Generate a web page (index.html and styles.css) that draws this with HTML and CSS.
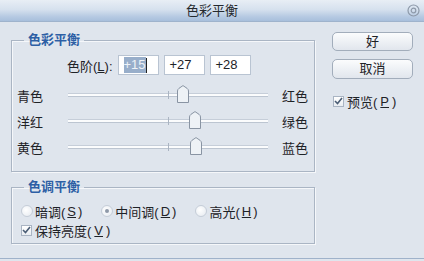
FILE: index.html
```html
<!DOCTYPE html>
<html lang="zh-CN">
<head>
  <meta charset="UTF-8" />
  <title>色彩平衡</title>
  <link rel="stylesheet" href="styles.css">
</head>
<body>
  <div class="dialog">
    <div class="titlebar">
      <span class="title">色彩平衡</span>
      <svg class="close" width="13" height="13" viewBox="0 0 13 13">
        <circle cx="6.5" cy="6.5" r="5.5" fill="none" stroke="#8d99a9" stroke-width="1.2"/>
        <circle cx="6.5" cy="6.5" r="2.3" fill="none" stroke="#8d99a9" stroke-width="1.2"/>
      </svg>
    </div>

    <div class="main">
      <div class="left">
        <!-- Color balance group -->
        <fieldset class="group balance">
          <legend>色彩平衡</legend>
          <div class="levels">
            <span class="levels-label">色阶(<u>L</u>):</span>
            <div class="field"><span class="sel">+15</span><span class="caret"></span></div>
            <div class="field">+27</div>
            <div class="field">+28</div>
          </div>

          <div class="slider-row">
            <span>青色</span>
            <div class="track">
              <i class="tick"></i>
              <svg class="thumb" style="left: 57.5%;" width="12" height="18" viewBox="0 0 12 18"><path d="M0.5 17.5 V6 Q0.5 4.5 2 3.3 L6 0.6 L10 3.3 Q11.5 4.5 11.5 6 V17.5 Z"/></svg>
            </div>
            <span>红色</span>
          </div>
          <div class="slider-row">
            <span>洋红</span>
            <div class="track">
              <i class="tick"></i>
              <svg class="thumb" style="left: 63.5%;" width="12" height="18" viewBox="0 0 12 18"><path d="M0.5 17.5 V6 Q0.5 4.5 2 3.3 L6 0.6 L10 3.3 Q11.5 4.5 11.5 6 V17.5 Z"/></svg>
            </div>
            <span>绿色</span>
          </div>
          <div class="slider-row">
            <span>黄色</span>
            <div class="track">
              <i class="tick"></i>
              <svg class="thumb" style="left: 64%;" width="12" height="18" viewBox="0 0 12 18"><path d="M0.5 17.5 V6 Q0.5 4.5 2 3.3 L6 0.6 L10 3.3 Q11.5 4.5 11.5 6 V17.5 Z"/></svg>
            </div>
            <span>蓝色</span>
          </div>
        </fieldset>

        <!-- Tone balance group -->
        <fieldset class="group tone">
          <legend>色调平衡</legend>
          <div class="radios">
            <label class="radio"><span class="dot"></span>暗调(<u>S</u>)</label>
            <label class="radio"><span class="dot on"></span>中间调(<u>D</u>)</label>
            <label class="radio"><span class="dot"></span>高光(<u>H</u>)</label>
          </div>
          <label class="check">
            <span class="box"><svg width="9" height="8" viewBox="0 0 9 8"><path d="M1 4 L3.5 6.5 L8 1" fill="none" stroke="#4a5d75" stroke-width="1.6"/></svg></span>
            保持亮度(<u>V</u>)
          </label>
        </fieldset>
      </div>

      <div class="right">
        <button class="btn ok">好</button>
        <button class="btn cancel">取消</button>
        <label class="check preview">
          <span class="box"><svg width="9" height="8" viewBox="0 0 9 8"><path d="M1 4 L3.5 6.5 L8 1" fill="none" stroke="#4a5d75" stroke-width="1.6"/></svg></span>
          预览(<u>P</u>)
        </label>
      </div>
    </div>
  </div>
</body>
</html>
```

FILE: styles.css
```css
:root {
  --bg: #dfe5ed;
  --text: #1e2227;
  --legend: #2d5fa5;
  --line: #aab5c4;
}

body {
  margin: 0;
  width: 424px;
  height: 261px;
  overflow: hidden;
  background: var(--bg);
  font-family: "Liberation Sans", "Noto Sans CJK SC", sans-serif;
  font-size: 13px;
  color: var(--text);
}

.dialog {
  height: 258px;
  border-bottom: 1px solid #9fb2ca;
}

/* Title bar */
.titlebar {
  position: relative;
  height: 21px;
  border-bottom: 1px solid #9fb3cc;
  background: linear-gradient(to bottom, #e8eef5 0%, #d6e1ee 45%, #b5c9e2 80%, #a8bfdc 100%);
  display: flex;
  justify-content: center;
  align-items: center;
}

.title {
  font-size: 13px;
  line-height: 14px;
  color: #25292e;
}

.close {
  position: absolute;
  right: 4px;
  top: 4px;
}

/* Main area */
.main {
  display: flex;
  padding-left: 11px;
}

.left {
  width: 304px;
}

.right {
  width: 81px;
  margin-left: 17px;
  padding-top: 10px;
  display: flex;
  flex-direction: column;
}

/* Groups */
.group {
  margin: 0;
  border: 1px solid var(--line);
  box-shadow: inset 1px 1px 0 #f5f7fa, 1px 1px 0 #f5f7fa;
  padding: 8px 5px 11px 5px;
  min-width: 0;
}

.group legend {
  margin-left: 7px;
  padding: 0 4px;
  font-size: 13px;
  line-height: 14px;
  font-weight: bold;
  color: var(--legend);
}

.balance {
  margin-top: 11px;
  width: 304px;
  box-sizing: border-box;
}

.tone {
  margin-top: 8px;
  width: 304px;
  box-sizing: border-box;
  padding: 10px 5px 6px 5px;
}

/* Levels row */
.levels {
  display: flex;
  align-items: center;
  height: 20px;
  margin-bottom: 7px;
}

.levels-label {
  margin-left: 50px;
  margin-right: 5px;
}

.field {
  box-sizing: border-box;
  width: 41px;
  height: 20px;
  margin-right: 5px;
  background: #fff;
  border: 1px solid #b9c4d2;
  padding-left: 5px;
  line-height: 18px;
  display: flex;
  align-items: center;
}

.sel {
  background: #98aeca;
  color: #eef2f7;
  line-height: 16px;
}

.caret {
  width: 1px;
  height: 15px;
  background: #222;
}

/* Sliders */
.slider-row {
  display: grid;
  grid-template-columns: 51px 200px 1fr;
  column-gap: 14px;
  align-items: center;
  height: 26px;
}

.slider-row span:last-child {
  grid-column: 3;
}

.slider-row span:first-child {
  grid-column: 1;
}

.slider-row .track {
  grid-column: 2;
}

.slider-row {
  grid-template-columns: 51px 214px 1fr;
  column-gap: 0;
}

.track {
  position: relative;
  width: 200px;
  height: 4px;
  background: linear-gradient(to bottom, #c6ced9 0, #c6ced9 1px, #fbfcfd 1px, #fbfcfd 3px, #bcc5d1 3px);
}

.tick {
  position: absolute;
  left: 100px;
  top: -2px;
  width: 1px;
  height: 8px;
  background: #aab4c2;
}

.thumb {
  position: absolute;
  top: -8px;
  margin-left: -6px;
}

.thumb path {
  fill: #eef2f6;
  stroke: #8994a3;
  stroke-width: 1;
}

/* Radios and checks */
.radios {
  display: flex;
  align-items: center;
  height: 14px;
  margin-left: 4px;
  gap: 19px;
}

.radio {
  display: flex;
  align-items: center;
  gap: 2px;
}

.dot {
  box-sizing: border-box;
  width: 12px;
  height: 12px;
  border-radius: 50%;
  border: 1px solid #c5cdd8;
  background: radial-gradient(circle at 40% 40%, #ffffff, #e4e9ef);
  display: flex;
  align-items: center;
  justify-content: center;
}

.dot.on::after {
  content: "";
  width: 4px;
  height: 4px;
  border-radius: 50%;
  background: #8e99a8;
}

.check {
  display: flex;
  align-items: center;
  gap: 3px;
  height: 14px;
}

.tone .check {
  margin-top: 5px;
  margin-left: 4px;
}

.box {
  box-sizing: border-box;
  width: 11px;
  height: 11px;
  border: 1px solid #a9b4c3;
  background: linear-gradient(to bottom, #ffffff, #e9edf2);
  display: flex;
  align-items: center;
  justify-content: center;
}

/* Buttons */
.btn {
  box-sizing: border-box;
  width: 81px;
  border: 1px solid #a2adbb;
  border-radius: 5px;
  background: linear-gradient(to bottom, #fbfcfd 0%, #eef1f5 50%, #e1e6ed 100%);
  font-family: "Liberation Sans", "Noto Sans CJK SC", sans-serif;
  font-size: 13px;
  color: var(--text);
  padding: 0;
}

.ok {
  height: 19px;
  line-height: 17px;
}

.cancel {
  height: 20px;
  line-height: 18px;
  margin-top: 8px;
}

.preview {
  margin-top: 15px;
  margin-left: 1px;
}
```
